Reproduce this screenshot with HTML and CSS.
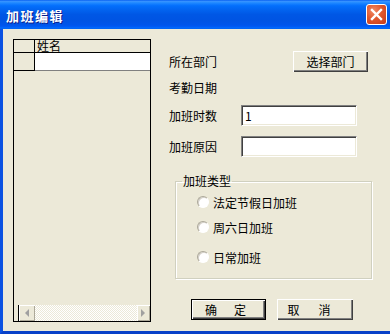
FILE: index.html
```html
<!DOCTYPE html>
<html lang="zh">
<head>
<meta charset="utf-8">
<title>加班编辑</title>
<link rel="stylesheet" href="styles.css">
</head>
<body>
<div class="window">
  <div class="titlebar">
    <span class="title">加班编辑</span>
    <div class="close">
      <svg width="13" height="13" viewBox="0 0 13 13"><path d="M2 2 L11 11 M11 2 L2 11" stroke="#fff" stroke-width="2.4" stroke-linecap="square"/></svg>
    </div>
  </div>
  <div class="body">
    <div class="grid">
      <div class="grid-head"><div class="sel"></div><div class="col">姓名</div></div>
      <div class="grid-row"><div class="sel sel-row"></div><div class="cell"></div></div>
      <div class="grid-fill"></div>
      <div class="hscroll">
        <div class="hs-pad"></div>
        <div class="hs-line"></div>
        <div class="sb-btn sb-left"><svg width="5" height="8" viewBox="0 0 5 8"><path d="M4 0 L0 4 L4 8 Z" fill="#A0A0A0"/></svg></div>
        <div class="sb-track"></div>
        <div class="sb-btn sb-right"><svg width="5" height="8" viewBox="0 0 5 8"><path d="M0 0 L4 4 L0 8 Z" fill="#A0A0A0"/></svg></div>
      </div>
    </div>
    <div class="form">
      <div class="row row1">
        <span class="label">所在部门</span>
        <button class="btn btn-dept">选择部门</button>
      </div>
      <div class="row row2"><span class="label">考勤日期</span></div>
      <div class="row row3">
        <span class="label">加班时数</span>
        <div class="input">1</div>
      </div>
      <div class="row row4">
        <span class="label">加班原因</span>
        <div class="input"></div>
      </div>
      <fieldset class="group">
        <legend>加班类型</legend>
        <div class="radio r1"><span class="dot"></span><span>法定节假日加班</span></div>
        <div class="radio r2"><span class="dot"></span><span>周六日加班</span></div>
        <div class="radio r3"><span class="dot"></span><span>日常加班</span></div>
      </fieldset>
      <div class="actions">
        <button class="btn btn-ok"><span>确</span><span>定</span></button>
        <button class="btn btn-cancel"><span>取</span><span>消</span></button>
      </div>
    </div>
  </div>
</div>
</body>
</html>
```
FILE: styles.css
```css
* { box-sizing: border-box; }
html, body { margin: 0; padding: 0; }
body {
  width: 390px;
  height: 334px;
  overflow: hidden;
  font-family: "Noto Sans CJK SC", "Liberation Sans", sans-serif;
  font-size: 12px;
  color: #000;
  background: #ECE9D8;
}
.window {
  width: 390px;
  height: 334px;
  display: flex;
  flex-direction: column;
}
.titlebar {
  height: 29px;
  flex: none;
  display: flex;
  align-items: center;
  justify-content: space-between;
  padding: 0 3px 0 6px;
  background: linear-gradient(180deg, #0058EE 0%, #3A93FF 4%, #288EFF 8%, #127DFF 14%, #036FFC 20%, #0262EE 36%, #0057E5 50%, #0054E3 70%, #0055EB 86%, #005BF5 92%, #026AFE 96%, #0062EF 100%);
}
.title {
  color: #fff;
  font-weight: bold;
  font-size: 13px;
  letter-spacing: 1.5px;
  text-shadow: 1px 1px #0A1E8C;
  margin-top: 1px;
}
.close {
  width: 21px;
  height: 21px;
  border: 1px solid #fff;
  border-radius: 3px;
  background: radial-gradient(circle at 35% 30%, #F08A66 0%, #E0582E 45%, #C43A1A 100%);
  display: flex;
  align-items: center;
  justify-content: center;
}
.close svg { display: block; }
.body {
  flex: 1;
  display: flex;
  align-items: flex-start;
  padding: 10px 0 0 10px;
  border-left: 3px solid #0B52E2;
  border-bottom: 3px solid #0841C8;
  background: #ECE9D8;
}
.grid {
  width: 138px;
  height: 283px;
  border: 1px solid #000;
  display: flex;
  flex-direction: column;
  background: #ECE9D8;
}
.grid-head {
  display: flex;
  height: 13px;
  border-bottom: 1px solid #000;
  flex: none;
}
.sel {
  width: 21px;
  flex: none;
  border-right: 1px solid #000;
}
.col {
  flex: 1;
  line-height: 12px;
  padding-left: 2px;
}
.grid-row {
  display: flex;
  height: 18px;
  flex: none;
}
.sel-row { border-bottom: 1px solid #000; }
.cell {
  flex: 1;
  background: #fff;
  border-bottom: 1px solid #808080;
}
.grid-fill { flex: 1; }
.hscroll {
  height: 16px;
  flex: none;
  display: flex;
}
.hs-pad { width: 4px; flex: none; }
.hs-line { width: 1px; flex: none; background: #000; }
.sb-btn {
  flex: none;
  display: flex;
  align-items: center;
  justify-content: center;
  background: #ECE9D8;
  box-shadow: inset 1px 1px #fff, inset -1px -1px #ACA899;
}
.sb-left { width: 16px; }
.sb-right { width: 13px; }
.sb-track {
  flex: 1;
  background-color: #ECE9D8;
  background-image: conic-gradient(#fff 25%, transparent 0 50%, #fff 0 75%, transparent 0);
  background-size: 2px 2px;
}
.form {
  width: 202px;
  margin-left: 18px;
  margin-top: 12px;
  display: flex;
  flex-direction: column;
}
.row {
  height: 21px;
  display: flex;
  align-items: center;
  width: 199px;
}
.row2 { margin-top: 5px; }
.row3 { margin-top: 7px; }
.row4 { margin-top: 10px; }
.label {
  width: 72px;
  flex: none;
  line-height: 14px;
}
.btn {
  font-family: inherit;
  font-size: 12px;
  color: #000;
  background: #ECE9D8;
  border: none;
  padding: 0;
  height: 21px;
  display: flex;
  align-items: center;
  justify-content: center;
  box-shadow: inset 1px 1px #fff, inset -1px -1px #404040, inset -2px -2px #808080;
}
.btn-dept {
  width: 75px;
  margin-left: auto;
}
.input {
  width: 116px;
  height: 21px;
  background: #fff;
  border: 1px solid;
  border-color: #808080 #fff #fff #808080;
  box-shadow: inset 1px 1px #404040, inset -1px -1px #ECE9D8;
  padding: 0 0 0 3px;
  display: flex;
  align-items: center;
  line-height: 14px;
}
.group {
  margin: 17px 0 0 6px;
  width: 197px;
  padding: 6px 0 13px 21px;
  border: 1px solid #D0D0BF;
  box-shadow: inset 1px 1px #fff, 1px 1px #fff;
  display: flex;
  flex-direction: column;
}
.group legend {
  padding: 0 1px;
  margin-left: -15px;
  line-height: 14px;
}
.radio {
  height: 16px;
  display: flex;
  align-items: center;
  gap: 4px;
}
.r2 { margin-top: 9px; }
.r3 { margin-top: 14px; }
.dot {
  width: 12px;
  height: 12px;
  flex: none;
  border-radius: 50%;
  background: #fff;
  border: 1px solid;
  border-color: #ACA899 #fff #fff #ACA899;
  box-shadow: inset 1px 1px #D4D0C8;
}
.actions {
  display: flex;
  margin-top: 20px;
  margin-left: 22px;
  gap: 11px;
}
.btn-ok {
  width: 75px;
  border: 1px solid #000;
  gap: 17px;
  padding-right: 6px;
}
.btn-cancel {
  width: 76px;
  gap: 19px;
  padding-right: 12px;
}
```
